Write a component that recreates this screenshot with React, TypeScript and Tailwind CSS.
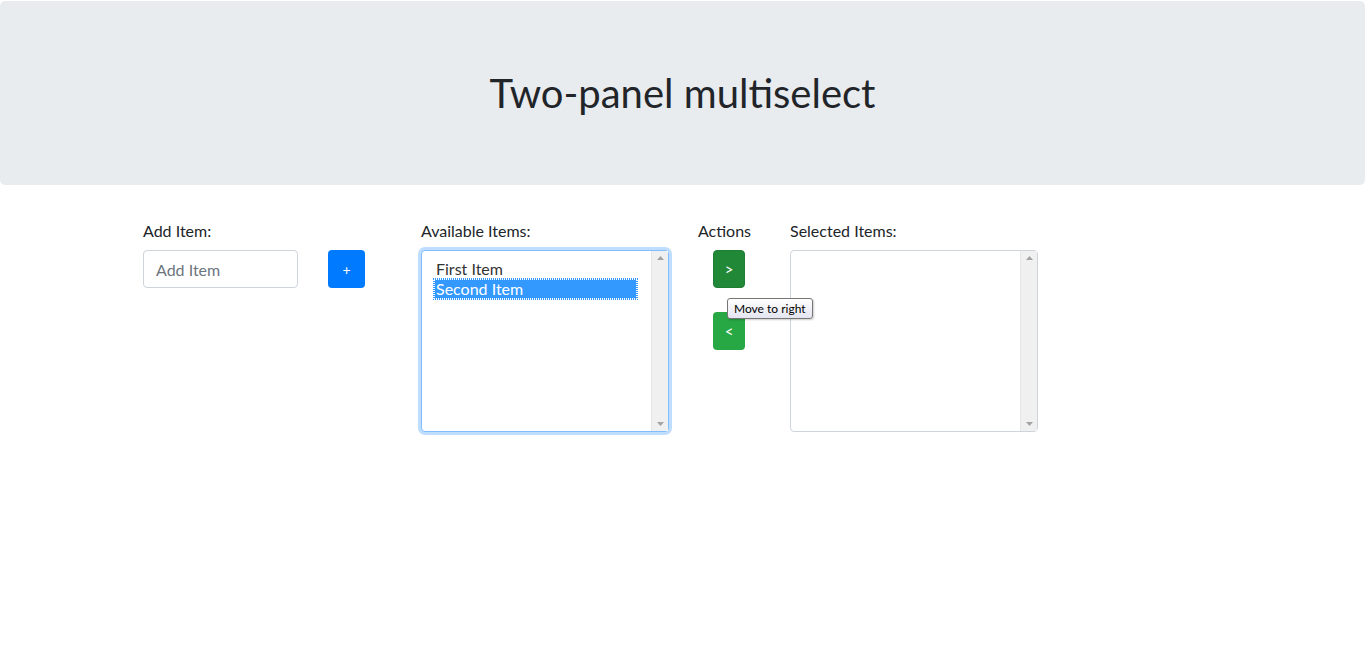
import { useState } from "react";

// Two-panel multiselect, bootstrap-ish look
interface Item {
  id: number;
  label: string;
}

function ScrollBar() {
  return (
    <div className="flex w-[17px] flex-col items-center justify-between border-l border-[#e6e6e6] bg-[#f0f0f0] py-[5px]">
      <svg width="7" height="4" viewBox="0 0 7 4">
        <path d="M0 4 L3.5 0 L7 4 Z" fill="#a3a3a3" />
      </svg>
      <svg width="7" height="4" viewBox="0 0 7 4">
        <path d="M0 0 L3.5 4 L7 0 Z" fill="#a3a3a3" />
      </svg>
    </div>
  );
}

function ListBox({
  items,
  selected,
  focused,
}: {
  items: Item[];
  selected?: number;
  focused?: boolean;
}) {
  return (
    <div
      className={
        focused
          ? "flex h-[182px] w-[248px] rounded border border-[#80bdff] bg-white shadow-[0_0_0_3px_rgba(0,123,255,0.25)]"
          : "flex h-[182px] w-[248px] rounded border border-[#ced4da] bg-white"
      }
    >
      <div className="flex-1 pl-[12px] pr-[14px] pt-[8px]">
        {items.map((it) =>
          it.id === selected ? (
            <div
              key={it.id}
              className="h-[20px] border border-dotted border-white bg-[#3399ff] pl-[1px] text-[16px] leading-[18px] text-white outline outline-1 outline-dotted outline-[#3399ff]"
            >
              {it.label}
            </div>
          ) : (
            <div key={it.id} className="h-[20px] pl-[2px] text-[16px] leading-[20px] text-[#333]">
              {it.label}
            </div>
          )
        )}
      </div>
      <ScrollBar />
    </div>
  );
}

export default function App() {
  const [available] = useState<Item[]>([
    { id: 1, label: "First Item" },
    { id: 2, label: "Second Item" },
  ]);

  return (
    <div className="min-h-screen bg-white font-['Lato','Liberation_Sans',sans-serif] text-[#212529]">
      <div className="mt-px mb-8 rounded-[5px] bg-[#e9ecef] px-8 pt-[68px] pb-[60px]">
        <h1 className="mb-2 text-center text-[40px] font-normal leading-[48px]">
          Two-panel multiselect
        </h1>
      </div>

      <div className="flex pl-[143px] pt-px">
        <div className="w-[155px]">
          <div className="mb-[7px] pt-px text-[16px] leading-6">Add Item:</div>
          <input
            placeholder="Add Item"
            className="h-[38px] w-[155px] rounded border border-[#ced4da] px-3 text-[16px] text-[#495057] placeholder:text-[#6c757d]"
          />
        </div>

        <div className="ml-[30px] w-[37px] pt-8">
          <button className="h-[38px] w-[37px] rounded bg-[#007bff] text-[14px] text-white">+</button>
        </div>

        <div className="ml-[56px] w-[248px]">
          <div className="mb-[7px] pt-px text-[16px] leading-6">Available Items:</div>
          <ListBox items={available} selected={2} focused />
        </div>

        <div className="relative ml-[29px] w-[62px]">
          <div className="mb-[7px] pt-px text-[16px] leading-6">Actions</div>
          <div className="flex flex-col items-center gap-6">
            <button className="h-[38px] w-[32px] rounded border border-[#1e7e34] bg-[#218838] text-[15px] text-white">
              &gt;
            </button>
            <button className="h-[38px] w-[32px] rounded bg-[#28a745] text-[15px] text-white">&lt;</button>
          </div>
          <div className="absolute left-[29px] top-[80px] z-10 whitespace-nowrap rounded-[3px] border border-[#767676] bg-gradient-to-b from-white to-[#e4e5f0] px-[6px] py-[2px] text-[12px] leading-[15px] text-black shadow-[1px_1px_2px_rgba(0,0,0,0.2)]">
            Move to right
          </div>
        </div>

        <div className="ml-[30px] w-[248px]">
          <div className="mb-[7px] pt-px text-[16px] leading-6">Selected Items:</div>
          <ListBox items={[]} />
        </div>
      </div>
    </div>
  );
}
